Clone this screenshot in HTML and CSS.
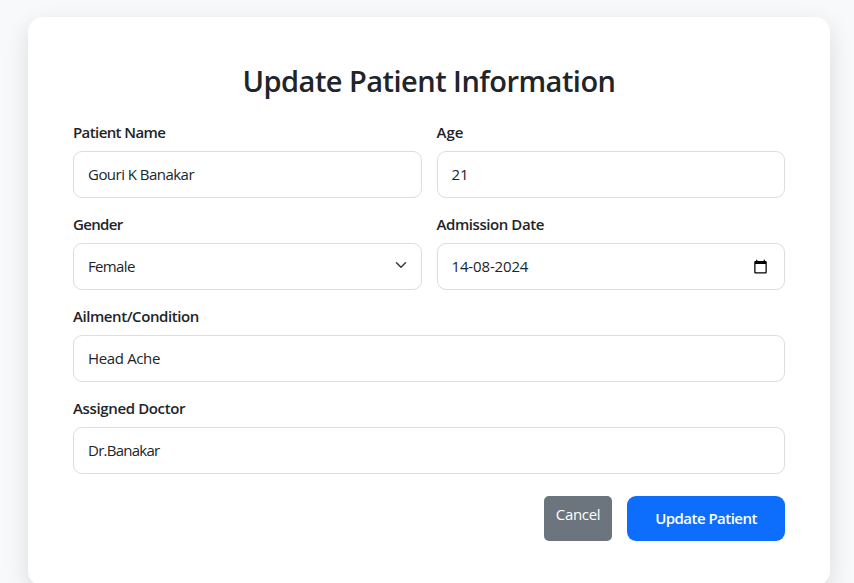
FILE: index.html
```html
<!DOCTYPE html>
<html lang="en">
<head>
<meta charset="utf-8">
<title>Update Patient Information</title>
<link rel="stylesheet" href="styles.css">
</head>
<body>
<main class="card">
  <h2 class="title">Update Patient Information</h2>
  <form class="form">
    <div class="field"><label class="label l-name">Patient Name</label><div class="control v-name">Gouri K Banakar</div></div>
    <div class="field"><label class="label l-age">Age</label><div class="control">21</div></div>
    <div class="field"><label class="label l-gender">Gender</label><div class="control v-gender"><span>Female</span>
      <svg class="chevron" viewBox="0 0 16 16"><path d="m2 5 6 6 6-6" fill="none" stroke="#343a40" stroke-width="2" stroke-linecap="round" stroke-linejoin="round"/></svg></div></div>
    <div class="field"><label class="label">Admission Date</label><div class="control v-date"><span>14-08-2024</span>
      <svg class="calendar" viewBox="0 0 24 24"><path d="M20 3h-1V1h-2v2H7V1H5v2H4c-1.1 0-2 .9-2 2v16c0 1.1.9 2 2 2h16c1.1 0 2-.9 2-2V5c0-1.1-.9-2-2-2zm0 18H4V8h16v13z"/></svg></div></div>
    <div class="field wide"><label class="label">Ailment/Condition</label><div class="control v-ailment">Head Ache</div></div>
    <div class="field wide"><label class="label l-doctor">Assigned Doctor</label><div class="control v-doctor">Dr.Banakar</div></div>
  </form>
  <div class="actions">
    <button class="btn cancel" type="button">Cancel</button>
    <button class="btn update" type="button">Update Patient</button>
  </div>
</main>
</body>
</html>
```
FILE: styles.css
```css
* { box-sizing: border-box; }
body {
  margin: 0;
  height: 583px;
  overflow: hidden;
  background: #f8f9fa;
  color: #212529;
  font-family: "Segoe UI", "Open Sans", "Noto Sans", sans-serif;
  font-size: 15px;
}
.card {
  width: 802px;
  height: 569px;
  margin: 17px 0 0 28px;
  padding: 45px;
  background: #fff;
  border-radius: 15px;
  box-shadow: 0 8px 25px rgba(0, 0, 0, .12);
}
.title {
  margin: 0 0 20px;
  height: 39px;
  line-height: 38px;
  font-size: 29px;
  font-weight: 600;
  letter-spacing: -.53px;
  text-align: center;
  white-space: nowrap;
}
.form {
  display: grid;
  grid-template-columns: 1fr 1fr;
  gap: 15px;
}
.wide { grid-column: 1 / -1; }
.field { height: 77px; }
.label {
  display: block;
  height: 23px;
  margin-bottom: 7px;
  line-height: 23px;
  font-weight: 600;
  letter-spacing: -.43px;
}
.l-name { letter-spacing: -.6px; }
.l-age { letter-spacing: 0; }
.l-gender { letter-spacing: -.65px; }
.l-doctor { letter-spacing: -.36px; }
.control {
  display: flex;
  align-items: center;
  justify-content: space-between;
  height: 47px;
  padding: 0 14px 1px;
  border: 1px solid #dcdddf;
  border-radius: 9px;
}
.v-name { letter-spacing: -.53px; }
.v-gender { letter-spacing: -.65px; }
.v-date { letter-spacing: -.15px; }
.v-ailment { letter-spacing: -.35px; }
.v-doctor { letter-spacing: -.75px; }
.chevron { width: 12px; height: 12px; margin-bottom: 2px; }
.calendar { width: 15px; height: 15px; margin: 0 2px 0 0; }
.actions {
  display: flex;
  justify-content: flex-end;
  gap: 15px;
  margin-top: 22px;
}
.btn {
  height: 45px;
  padding: 0;
  border: 0;
  color: #fff;
  font: inherit;
}
.cancel { width: 68px; padding-bottom: 10px; border-radius: 5px; background: #6c757d; letter-spacing: -.35px; }
.update { width: 158px; padding-bottom: 2px; border-radius: 9px; background: #0d6efd; font-weight: 600; letter-spacing: -.53px; }
```
